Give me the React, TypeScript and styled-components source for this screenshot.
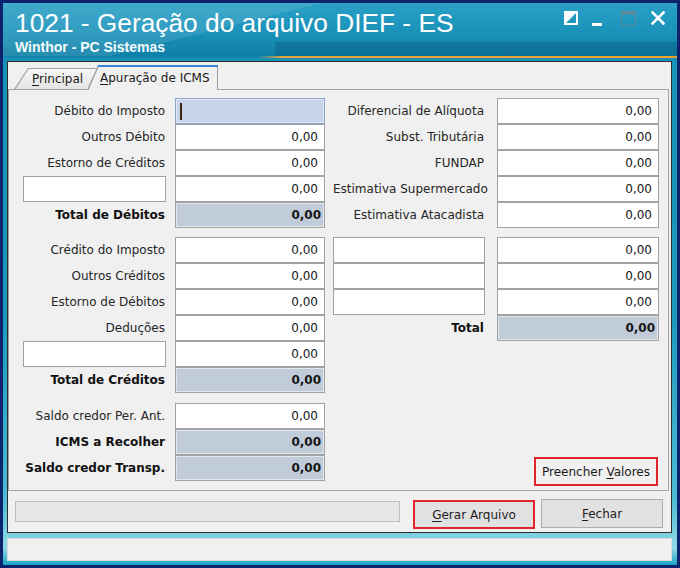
import styled, { createGlobalStyle } from "styled-components";

const GlobalStyle = createGlobalStyle`
  html, body {
    margin: 0;
    padding: 0;
  }
  body {
    width: 680px;
    height: 568px;
    overflow: hidden;
    font-family: "DejaVu Sans", "Liberation Sans", sans-serif;
    font-size: 12px;
    color: #1c1c1c;
  }
`;

type iRow = {
  label?: string;
  value?: string;
  blank?: boolean;
  total?: boolean;
  focus?: boolean;
};

const debitRows: iRow[] = [
  { label: "Débito do Imposto", focus: true },
  { label: "Outros Débito", value: "0,00" },
  { label: "Estorno de Créditos", value: "0,00" },
  { blank: true, value: "0,00" },
  { label: "Total de Débitos", value: "0,00", total: true }
];

const creditRows: iRow[] = [
  { label: "Crédito do Imposto", value: "0,00" },
  { label: "Outros Créditos", value: "0,00" },
  { label: "Estorno de Débitos", value: "0,00" },
  { label: "Deduções", value: "0,00" },
  { blank: true, value: "0,00" },
  { label: "Total de Créditos", value: "0,00", total: true }
];

const balanceRows: iRow[] = [
  { label: "Saldo credor Per. Ant.", value: "0,00" },
  { label: "ICMS a Recolher", value: "0,00", total: true },
  { label: "Saldo credor Transp.", value: "0,00", total: true }
];

const otherRows: iRow[] = [
  { label: "Diferencial de Alíquota", value: "0,00" },
  { label: "Subst. Tributária", value: "0,00" },
  { label: "FUNDAP", value: "0,00" },
  { label: "Estimativa Supermercado", value: "0,00" },
  { label: "Estimativa Atacadista", value: "0,00" }
];

const extraRows: iRow[] = [
  { blank: true, value: "0,00" },
  { blank: true, value: "0,00" },
  { blank: true, value: "0,00" },
  { label: "Total", value: "0,00", total: true }
];

const Frame = styled.div`
  width: 680px;
  height: 568px;
  box-sizing: border-box;
  padding: 3px;
  background: #0b236c;
  display: flex;
`;

const Chrome = styled.div`
  flex: 1;
  display: flex;
  flex-direction: column;
  background: linear-gradient(180deg, #1890b7 0%, #1c98bd 55%, #4cbbd4 88%, #8fd8e6 97%, #18a4c4 100%);
`;

const TitleBar = styled.div`
  height: 53px;
  display: flex;
  justify-content: space-between;
  align-items: flex-start;
  background:
    linear-gradient(90deg, rgba(0, 0, 0, 0) 272px, rgba(0, 55, 85, 0.22) 272px) 0 100% / 100% 14px no-repeat,
    linear-gradient(166deg, rgba(255, 255, 255, 0.1) 0 36%, rgba(255, 255, 255, 0) 36%),
    linear-gradient(180deg, #2aa0c6 0%, #1a92b9 55%, #0f80a7 100%);
`;

const TitleText = styled.div`
  padding: 5px 0 0 12px;
  color: #ffffff;
  font-family: "Liberation Sans", Arial, sans-serif;
`;

const Title = styled.div`
  font-size: 26.3px;
  line-height: 30px;
`;

const Subtitle = styled.div`
  font-size: 14px;
  line-height: 16px;
  font-weight: 700;
  margin-top: 1px;
  color: #f4fbfd;
`;

const WindowControls = styled.div`
  display: flex;
  align-items: flex-start;
  padding: 8px 12px 0 0;
`;

const ControlIcon = styled.svg<{ $ml: number }>`
  display: block;
  margin-left: ${p => p.$ml}px;
`;

const OrangeRule = styled.div`
  height: 2px;
  background: linear-gradient(90deg, #1185ab 0 255px, #e9a43c 280px, #f3a22c 100%);
`;

const Body = styled.div`
  flex: 1;
  display: flex;
  flex-direction: column;
  padding: 3px 5px 4px 4px;
  gap: 5px;
`;

const Window = styled.div`
  height: 472px;
  box-sizing: border-box;
  border: 1px solid #2e2e2e;
  background: #f0f0f0;
  display: flex;
  flex-direction: column;
  padding-right: 2px;
`;

const TabStrip = styled.div`
  height: 27px;
  display: flex;
  align-items: flex-end;
  padding-left: 6px;
`;

const Tab = styled.div<{ $active?: boolean }>`
  position: relative;
  isolation: isolate;
  box-sizing: border-box;
  width: ${p => (p.$active ? 131 : 83)}px;
  height: ${p => (p.$active ? 25 : 21)}px;
  margin-left: ${p => (p.$active ? -10 : 0)}px;
  margin-bottom: ${p => (p.$active ? -1 : 0)}px;
  padding-left: ${p => (p.$active ? 13 : 18)}px;
  z-index: ${p => (p.$active ? 2 : 1)};
  display: flex;
  align-items: center;
  white-space: nowrap;
  color: #1a1a1a;
  background: ${p =>
    p.$active ? "linear-gradient(180deg, #3b82d9 0 2px, #9c9c9c 2px)" : "#a4a4a4"};
  clip-path: ${p =>
    p.$active
      ? "polygon(11px 0, 100% 0, 100% 100%, 0 100%)"
      : "polygon(14px 0, 100% 0, 100% 100%, 0 100%)"};

  &::before {
    content: "";
    position: absolute;
    z-index: -1;
    top: ${p => (p.$active ? 2 : 1)}px;
    left: 1px;
    right: 1px;
    bottom: 0;
    background: ${p =>
      p.$active ? "#f0f0f0" : "linear-gradient(180deg, #f6f6f6, #e4e4e4)"};
    clip-path: ${p =>
      p.$active
        ? "polygon(10.5px 0, 100% 0, 100% 100%, 0.6px 100%)"
        : "polygon(13.6px 0, 100% 0, 100% 100%, 0.6px 100%)"};
  }
`;

const Mnemonic = styled.span`
  text-decoration: underline;
  text-underline-offset: 2px;
`;

const Panel = styled.div`
  height: 402px;
  box-sizing: border-box;
  border: 1px solid #a3a3a3;
  display: flex;
  gap: 8px;
  padding: 8px 9px 4px 14px;
`;

const Column = styled.div<{ $width: number }>`
  width: ${p => p.$width}px;
  display: flex;
  flex-direction: column;
`;

const Group = styled.div<{ $cols: string; $gap: number; $space?: number }>`
  display: grid;
  grid-template-columns: ${p => p.$cols};
  column-gap: ${p => p.$gap}px;
  grid-auto-rows: 26px;
  margin-top: ${p => p.$space || 0}px;
`;

const Label = styled.div<{ $bold?: boolean }>`
  text-align: right;
  white-space: nowrap;
  line-height: 26px;
  padding-right: 1px;
  font-weight: ${p => (p.$bold ? 700 : 400)};
  color: ${p => (p.$bold ? "#111111" : "#262626")};
`;

const Field = styled.div<{ $kind?: "plain" | "total" | "focus" }>`
  height: 26px;
  box-sizing: border-box;
  border: 1px solid ${p => (p.$kind === "focus" ? "#8ea6c6" : "#a2a2a2")};
  background: ${p =>
    p.$kind === "total" ? "#c0ccd9" : p.$kind === "focus" ? "#c7d4eb" : "#ffffff"};
  box-shadow: ${p =>
    p.$kind === "total"
      ? "inset 0 0 0 1px #e2e7ec"
      : p.$kind === "focus"
      ? "inset 0 0 0 1px #dfe7f4"
      : "none"};
  display: flex;
  align-items: center;
  justify-content: ${p => (p.$kind === "focus" ? "flex-start" : "flex-end")};
  padding: 0 ${p => (p.$kind === "total" ? 3 : 6)}px 0 4px;
  font-weight: ${p => (p.$kind === "total" ? 700 : 400)};
  color: #161616;
`;

const Caret = styled.span`
  width: 2px;
  height: 17px;
  background: #3a2a12;
`;

const FillButton = styled.div`
  align-self: flex-end;
  margin-top: auto;
  margin-right: 1px;
  width: 124px;
  height: 29px;
  box-sizing: border-box;
  border: 2px solid #e2242b;
  display: flex;
  align-items: center;
  justify-content: center;
  color: #1c1c1c;
`;

const BottomBar = styled.div`
  flex: 1;
  display: flex;
  align-items: flex-start;
  padding: 8px 0 0 7px;
`;

const ProgressTrack = styled.div`
  width: 385px;
  height: 21px;
  box-sizing: border-box;
  margin-top: 2px;
  border: 1px solid #bdbdbd;
  background: #e6e6e6;
`;

const ActionButton = styled.div<{ $marked?: boolean; $ml: number; $mt: number }>`
  width: 122px;
  height: 29px;
  box-sizing: border-box;
  margin-left: ${p => p.$ml}px;
  margin-top: ${p => p.$mt}px;
  border: ${p => (p.$marked ? "2px solid #e2242b" : "1px solid #adadad")};
  background: #e1e1e1;
  display: flex;
  align-items: center;
  justify-content: center;
  color: #1c1c1c;
`;

const StatusBar = styled.div`
  height: 23px;
  box-sizing: border-box;
  border: 1px solid #d6dadc;
  background: #f0f0f0;
`;

const renderRows = (rows: iRow[]) =>
  rows.map((row, i) => [
    row.blank ? (
      <Field key={`l${i}`} $kind="plain" />
    ) : (
      <Label key={`l${i}`} $bold={row.total}>
        {row.label}
      </Label>
    ),
    <Field
      key={`f${i}`}
      $kind={row.focus ? "focus" : row.total ? "total" : "plain"}
    >
      {row.focus ? <Caret /> : row.value}
    </Field>
  ]);

const LEFT_COLS = "143px 150px";
const RIGHT_COLS = "152px 162px";

const App = () => {
  return (
    <>
      <GlobalStyle />
      <Frame>
        <Chrome>
          <TitleBar>
            <TitleText>
              <Title>1021 - Geração do arquivo DIEF - ES</Title>
              <Subtitle>Winthor - PC Sistemas</Subtitle>
            </TitleText>
            <WindowControls>
              <ControlIcon $ml={0} width="14" height="14" viewBox="0 0 14 14">
                <rect x="1" y="1" width="12" height="12" fill="none" stroke="#fff" strokeWidth="2" />
                <path d="M1 1H13L1 13Z" fill="#fff" />
              </ControlIcon>
              <ControlIcon $ml={14} width="10" height="16" viewBox="0 0 10 16">
                <rect x="0" y="12" width="10" height="3" fill="#fff" />
              </ControlIcon>
              <ControlIcon $ml={19} width="15" height="15" viewBox="0 0 15 15">
                <rect x="0.5" y="0.5" width="14" height="14" fill="none" stroke="#5f8c9d" strokeWidth="1" />
                <rect x="0.5" y="0.5" width="14" height="3" fill="#5f8c9d" />
              </ControlIcon>
              <ControlIcon $ml={15} width="14" height="14" viewBox="0 0 14 14">
                <path d="M1.5 1.5L12.5 12.5M12.5 1.5L1.5 12.5" stroke="#fff" strokeWidth="2.6" strokeLinecap="square" />
              </ControlIcon>
            </WindowControls>
          </TitleBar>
          <OrangeRule />
          <Body>
            <Window>
              <TabStrip>
                <Tab>
                  <span>
                    <Mnemonic>P</Mnemonic>rincipal
                  </span>
                </Tab>
                <Tab $active>
                  <span>
                    <Mnemonic>A</Mnemonic>puração de ICMS
                  </span>
                </Tab>
              </TabStrip>
              <Panel>
                <Column $width={302}>
                  <Group $cols={LEFT_COLS} $gap={9}>
                    {renderRows(debitRows)}
                  </Group>
                  <Group $cols={LEFT_COLS} $gap={9} $space={9}>
                    {renderRows(creditRows)}
                  </Group>
                  <Group $cols={LEFT_COLS} $gap={9} $space={10}>
                    {renderRows(balanceRows)}
                  </Group>
                </Column>
                <Column $width={326}>
                  <Group $cols={RIGHT_COLS} $gap={12}>
                    {renderRows(otherRows)}
                  </Group>
                  <Group $cols={RIGHT_COLS} $gap={12} $space={9}>
                    {renderRows(extraRows)}
                  </Group>
                  <FillButton>
                    <span>
                      Preencher <Mnemonic>V</Mnemonic>alores
                    </span>
                  </FillButton>
                </Column>
              </Panel>
              <BottomBar>
                <ProgressTrack />
                <ActionButton $marked $ml={13} $mt={1}>
                  <span>
                    <Mnemonic>G</Mnemonic>erar Arquivo
                  </span>
                </ActionButton>
                <ActionButton $ml={6} $mt={0}>
                  <span>
                    <Mnemonic>F</Mnemonic>echar
                  </span>
                </ActionButton>
              </BottomBar>
            </Window>
            <StatusBar />
          </Body>
        </Chrome>
      </Frame>
    </>
  );
};

export default App;
